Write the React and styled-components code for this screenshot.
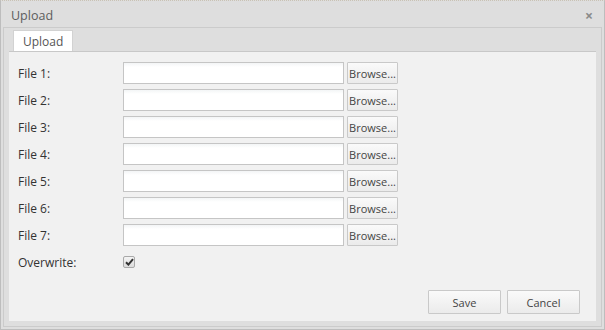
import styled, { createGlobalStyle } from "styled-components";

const GlobalStyle = createGlobalStyle`
  html, body {
    margin: 0;
    padding: 0;
    background: #ffffff;
  }
  * {
    box-sizing: border-box;
  }
`;

const Window = styled.div`
  width: 605px;
  height: 330px;
  display: flex;
  flex-direction: column;
  background: #dedede;
  border: 1px solid #bdbdbd;
  border-top: 1px dotted #c9c2b4;
  font-family: "Open Sans", "DejaVu Sans", sans-serif;
`;

const Header = styled.div`
  height: 26px;
  display: flex;
  align-items: center;
  justify-content: space-between;
  padding: 3px 10px 0 10px;
  font-size: 12.5px;
  color: #5d5d5d;
`;

const CloseButton = styled.span`
  font-size: 14px;
  font-weight: bold;
  color: #8a8a8a;
  line-height: 1;
  margin-right: 1px;
`;

const Frame = styled.div`
  flex: 1;
  display: flex;
  flex-direction: column;
  margin: 0 2px 2px 2px;
  border: 1px solid #cbcbcb;
  padding: 0 5px 5px 5px;
  background: #dedede;
`;

const TabStrip = styled.div`
  height: 24px;
  display: flex;
  align-items: flex-end;
  padding-left: 4px;
  border-bottom: 1px solid #c8c8c8;
`;

const Tab = styled.div`
  height: 21px;
  display: flex;
  align-items: center;
  padding: 0 9px;
  background: #ffffff;
  border: 1px solid #d2d2d2;
  border-bottom: none;
  font-size: 12px;
  color: #555;
`;

const TabBody = styled.div`
  flex: 1;
  display: flex;
  flex-direction: column;
  background: #f1f1f1;
  padding: 10px 9px 7px 9px;
`;

const Form = styled.div`
  display: flex;
  flex-direction: column;
  gap: 5px;
`;

const Row = styled.div`
  display: flex;
  align-items: center;
  height: 22px;
`;

const Label = styled.label`
  width: 105px;
  font-size: 12px;
  color: #333;
`;

const TextInput = styled.div`
  width: 221px;
  height: 22px;
  border: 1px solid #c5c5c5;
  background: linear-gradient(#f3f5f6 0, #ffffff 4px);
`;

const SmallButton = styled.button`
  margin-left: ${(p) => p.$gap}px;
  width: ${(p) => p.$width}px;
  height: ${(p) => p.$height}px;
  padding: 0;
  border: 1px solid #c9c9c9;
  border-radius: 1px;
  background: linear-gradient(#fafafa, #ebebeb);
  font-family: "Open Sans", "DejaVu Sans", sans-serif;
  font-size: 11px;
  color: #444;
`;

const CheckBox = styled.span`
  width: 12px;
  height: 12px;
  border: 1px solid #a9a9a9;
  border-radius: 2px;
  background: linear-gradient(#f4f4f4, #dcdcdc);
  display: flex;
  align-items: center;
  justify-content: center;
`;

const Footer = styled.div`
  margin-top: auto;
  display: flex;
  justify-content: flex-end;
  padding-right: 7px;
`;

const files = [1, 2, 3, 4, 5, 6, 7];

export default function App() {
  return (
    <>
      <GlobalStyle />
      <Window>
        <Header>
          <span>Upload</span>
          <CloseButton>×</CloseButton>
        </Header>
        <Frame>
          <TabStrip>
            <Tab>Upload</Tab>
          </TabStrip>
          <TabBody>
            <Form>
              {files.map((n) => (
                <Row key={n}>
                  <Label>File {n}:</Label>
                  <TextInput />
                  <SmallButton $gap={3} $width={51} $height={22}>
                    Browse...
                  </SmallButton>
                </Row>
              ))}
              <Row>
                <Label>Overwrite:</Label>
                <CheckBox>
                  <svg width="9" height="8" viewBox="0 0 9 8">
                    <path
                      d="M1 4.2 L3.4 6.6 L8 1.2"
                      fill="none"
                      stroke="#333"
                      strokeWidth="2"
                    />
                  </svg>
                </CheckBox>
              </Row>
            </Form>
            <Footer>
              <SmallButton $gap={0} $width={73} $height={24}>Save</SmallButton>
              <SmallButton $gap={6} $width={73} $height={24}>Cancel</SmallButton>
            </Footer>
          </TabBody>
        </Frame>
      </Window>
    </>
  );
}
